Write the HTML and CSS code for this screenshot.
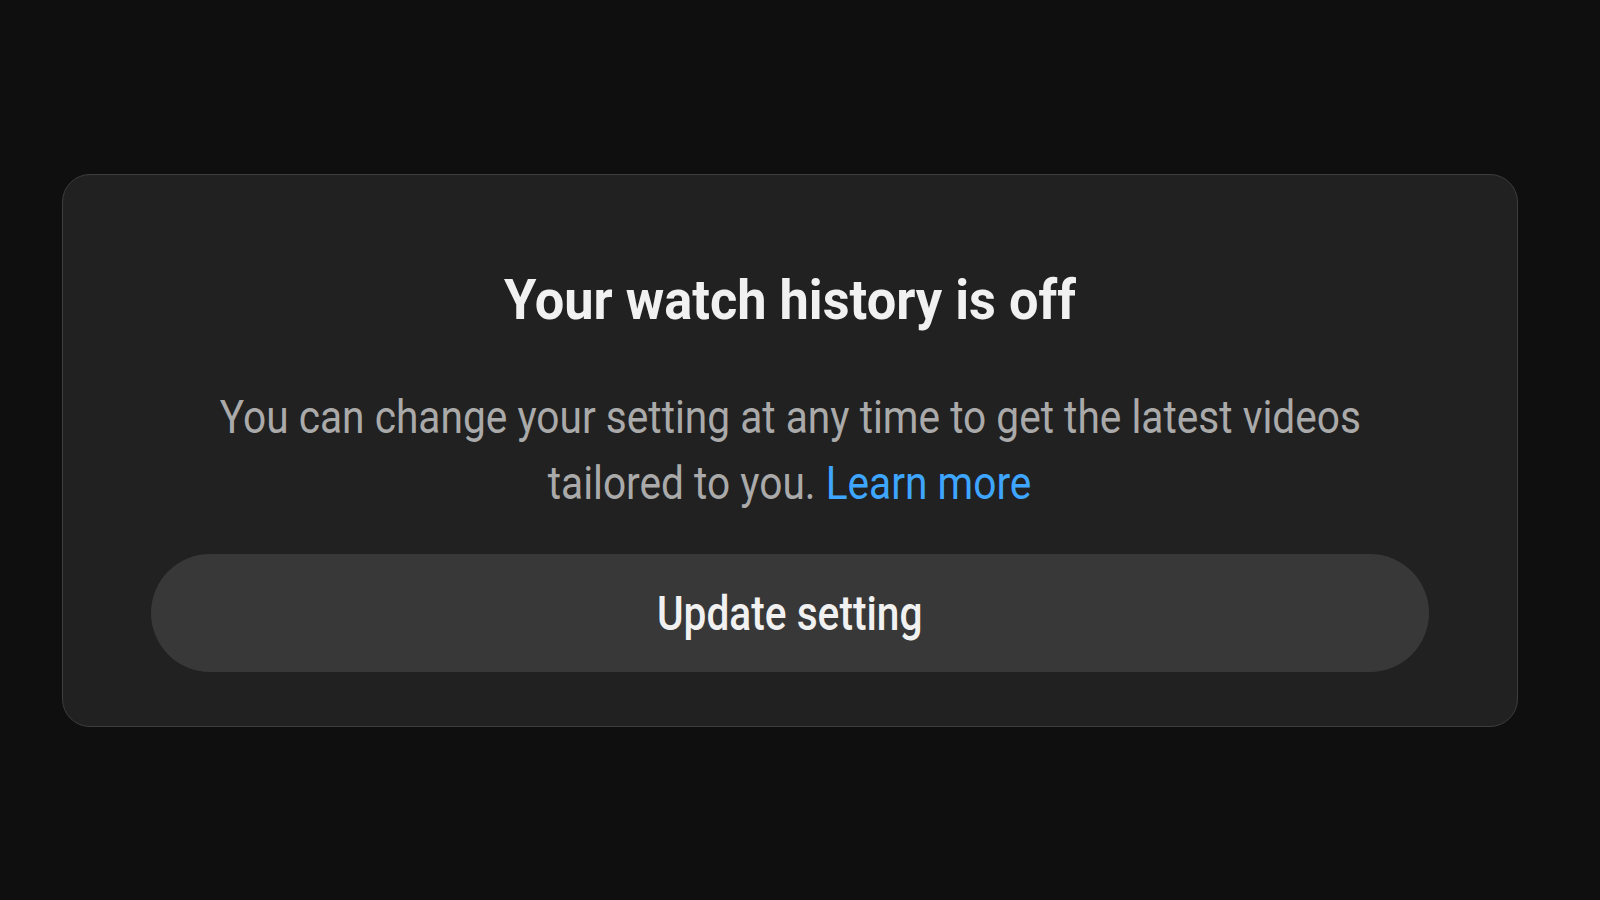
FILE: index.html
```html
<!DOCTYPE html>
<html lang="en">
<head>
<meta charset="utf-8">
<title>Watch history</title>
<link rel="stylesheet" href="styles.css">
</head>
<body>
<main class="page">
  <section class="card">
    <h1 class="title"><span class="squeeze title-text">Your watch history is off</span></h1>
    <p class="desc">
      <span class="squeeze desc-line">You can change your setting at any time to get the latest videos</span>
      <span class="squeeze desc-line">tailored to you. <a class="link" href="#">Learn more</a></span>
    </p>
    <button class="btn" type="button"><span class="squeeze btn-text">Update setting</span></button>
  </section>
</main>
</body>
</html>
```

FILE: styles.css
```css
html, body {
  margin: 0;
  padding: 0;
  background: #0f0f0f;
  height: 100%;
}

body {
  font-family: Roboto, "Liberation Sans", Arial, sans-serif;
}

.page {
  padding: 174px 82px 0 62px;
}

.card {
  box-sizing: border-box;
  width: 1456px;
  height: 553px;
  background: #212121;
  border: 1px solid #3d3d3d;
  border-radius: 28px;
  padding: 92px 88px 0 88px;
  display: flex;
  flex-direction: column;
  align-items: center;
}

.squeeze {
  display: inline-block;
  white-space: nowrap;
  transform-origin: center center;
}

.title {
  margin: 0;
  font-size: 56px;
  line-height: 67px;
  font-weight: 700;
  color: #f1f1f1;
}

.title-text {
  transform: scaleX(0.935);
}

.desc {
  margin: 50px 0 0 0;
  font-size: 46px;
  line-height: 66px;
  font-weight: 400;
  color: #aaaaaa;
  display: flex;
  flex-direction: column;
  align-items: center;
}

.desc-line {
  transform: scaleX(0.884);
}

.link {
  color: #3ea6ff;
  text-decoration: none;
}

.btn {
  margin-top: 38px;
  width: 100%;
  height: 118px;
  border: none;
  border-radius: 59px;
  background: #383838;
  color: #f1f1f1;
  font-family: Roboto, "Liberation Sans", Arial, sans-serif;
  font-size: 48px;
  font-weight: 500;
  display: flex;
  align-items: center;
  justify-content: center;
  padding: 0;
}

.btn-text {
  transform: scaleX(0.847);
}
```
